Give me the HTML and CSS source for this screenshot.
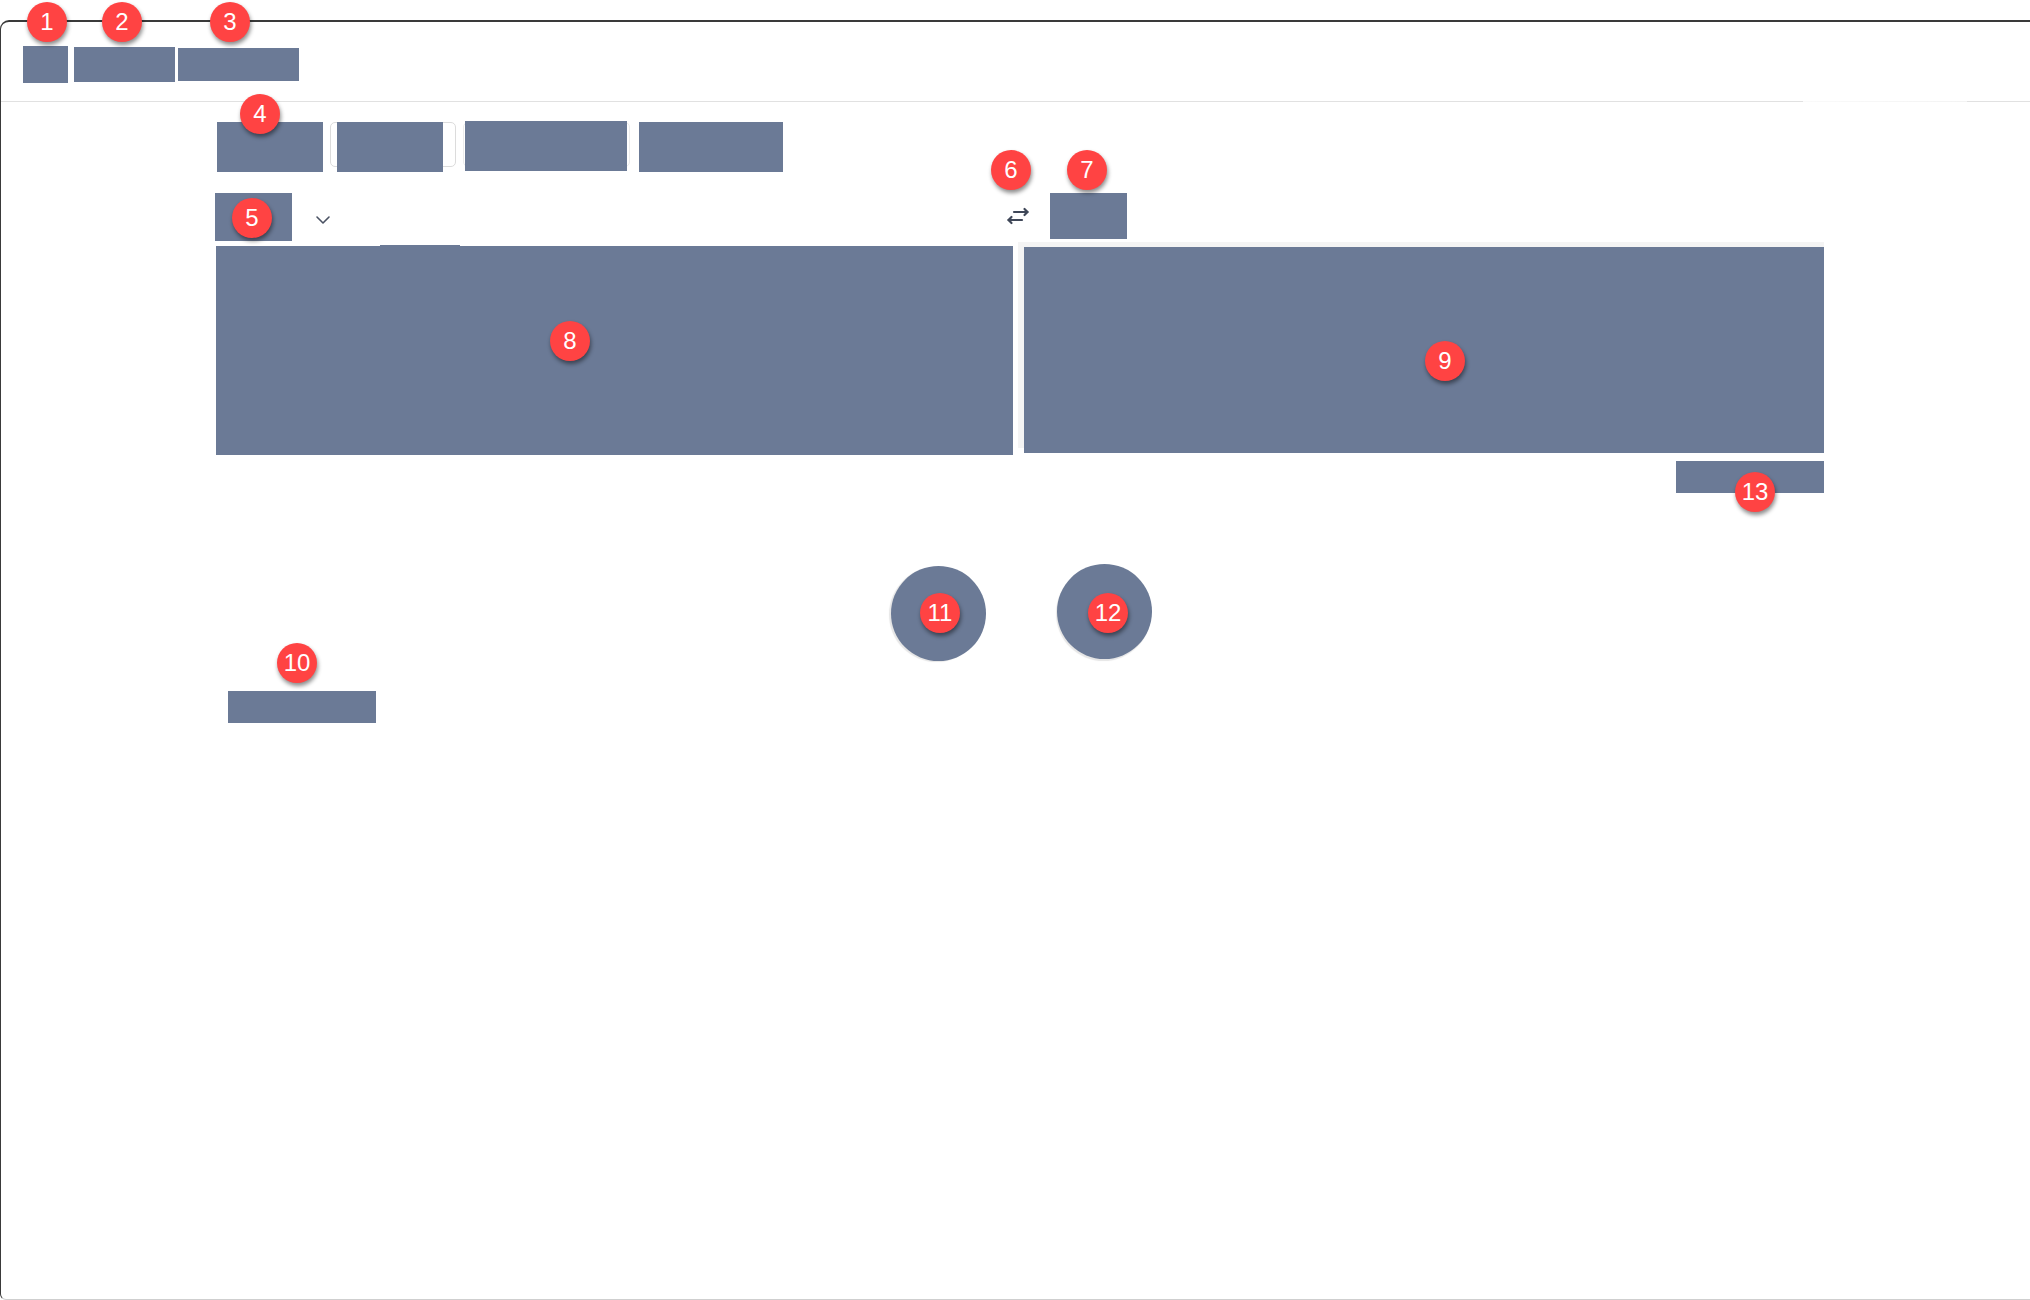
FILE: index.html
```html
<!DOCTYPE html>
<html lang="en">
<head>
<meta charset="utf-8">
<title>Translate layout</title>
<link rel="stylesheet" href="styles.css">
</head>
<body>
<div class="window">
  <header class="topbar">
    <div class="ph h1"></div>
    <div class="ph h2"></div>
    <div class="ph h3"></div>
  </header>
  <main class="content">
    <nav class="tabs">
      <div class="ph tab1"></div>
      <div class="tab-frame f2"><div class="ph tab2"></div></div>
      <div class="tab-frame f3"><div class="ph tab3"></div></div>
      <div class="ph tab4"></div>
    </nav>
    <div class="langbar">
      <div class="lang-left">
        <div class="ph lang-src"></div>
        <svg class="chevron" width="16" height="10" viewBox="0 0 16 10"><path d="M2 2 L8 8 L14 2" fill="none" stroke="#4a5263" stroke-width="1.6" stroke-linecap="round" stroke-linejoin="round"/></svg>
        <svg class="swap" width="24" height="18" viewBox="0 0 24 18"><g fill="none" stroke="#3f4758" stroke-width="2.2" stroke-linecap="round" stroke-linejoin="round"><path d="M8 5 H21.5"/><path d="M18.5 2 L21.5 5 L18.5 8"/><path d="M16 13 H2.5"/><path d="M5.5 10 L2.5 13 L5.5 16"/></g></svg>
      </div>
      <div class="lang-right">
        <div class="ph lang-dst"></div>
      </div>
    </div>
    <div class="panels">
      <div class="source-col">
        <div class="ph source-tab"></div>
        <div class="ph source"></div>
      </div>
      <div class="target-wrap"><div class="ph target"></div></div>
    </div>
    <div class="below">
      <div class="ph feedback"></div>
    </div>
    <div class="circles">
      <div class="ph circle c11"></div>
      <div class="ph circle c12"></div>
    </div>
    <div class="ph footer-link"></div>
  </main>
</div>

<div class="marker" style="left:47px;top:22px">1</div>
<div class="marker" style="left:122px;top:22px">2</div>
<div class="marker" style="left:230px;top:22px">3</div>
<div class="marker" style="left:260px;top:114px">4</div>
<div class="marker" style="left:252px;top:218px">5</div>
<div class="marker" style="left:1011px;top:170px">6</div>
<div class="marker" style="left:1087px;top:170px">7</div>
<div class="marker" style="left:570px;top:341px">8</div>
<div class="marker" style="left:1445px;top:361px">9</div>
<div class="marker" style="left:297px;top:663px">10</div>
<div class="marker" style="left:940px;top:613px">11</div>
<div class="marker" style="left:1108px;top:613px">12</div>
<div class="marker" style="left:1755px;top:492px">13</div>
</body>
</html>
```

FILE: styles.css
```css
* { box-sizing: border-box; }

html, body {
  margin: 0;
  padding: 0;
  background: #ffffff;
  font-family: "Liberation Sans", Arial, sans-serif;
}

body {
  width: 2030px;
  height: 1300px;
  overflow: hidden;
  position: relative;
}

.window {
  margin-top: 20px;
  height: 1280px;
  border-top: 2px solid #3a3a3a;
  border-left: 1px solid #3a3a3a;
  border-bottom: 1px solid #cfcfcf;
  border-radius: 9px 0 0 6px;
  background: #ffffff;
}

.ph { background: #6b7a96; }

/* top bar */
.topbar {
  height: 81px;
  padding: 5px 0 0 22px;
  display: flex;
  align-items: center;
  border-bottom: 1px solid transparent;
  background:
    linear-gradient(to right, #e1e1e1 0, #e1e1e1 1802px, #fafafa 1802px, #f3f3f3 1966px, #e1e1e1 1966px) bottom / 100% 1px no-repeat;
}
.h1 { width: 45px; height: 37px; }
.h2 { width: 101px; height: 35px; margin-left: 6px; }
.h3 { width: 121px; height: 33px; margin-left: 3px; }

/* main content */
.content {
  margin-left: 215px;
  width: 1608px;
  padding-top: 19px;
}

.tabs {
  display: flex;
  align-items: flex-start;
  height: 50px;
}
.tabs > * { flex-shrink: 0; }
.tab1 { width: 106px; height: 50px; margin-left: 1px; }
.tab-frame {
  height: 45px;
  border: 1px solid #dcdcdc;
  border-radius: 5px;
}
.f2 { width: 126px; margin-left: 7px; padding-left: 6px; }
.f3 { width: 167px; margin-left: 7px; padding-left: 1px; border-color: #ececec; }
.tab2 { width: 106px; height: 50px; margin-top: -1px; }
.tab3 { width: 162px; height: 50px; margin-top: -2px; }
.tab4 { width: 144px; height: 50px; margin-left: 9px; }

.langbar {
  margin-top: 21px;
  height: 49px;
  display: grid;
  grid-template-columns: 797px 1fr;
  column-gap: 11px;
}
.lang-left {
  display: flex;
  align-items: flex-start;
}
.lang-src { width: 77px; height: 48px; margin-left: -1px; }
.chevron { margin: 22px 0 0 23px; }
.swap { margin: 14px -17px 0 auto; }
.lang-right { display: flex; align-items: flex-start; }
.lang-dst { width: 77px; height: 46px; margin-left: 26px; }

.panels {
  display: grid;
  grid-template-columns: 797px 1fr;
  column-gap: 5px;
  align-items: start;
  height: 213px;
}
.source-col { padding-top: 3px; }
.source-tab { width: 80px; height: 1px; margin-left: 164px; }
.source { height: 209px; }
.target-wrap {
  height: 206px;
  background: #f4f4f4;
  padding: 5px 0 0 6px;
}
.target { height: 206px; }

.below {
  display: flex;
  justify-content: flex-end;
  margin-top: 6px;
}
.feedback { width: 148px; height: 32px; }

.circles {
  display: flex;
  align-items: flex-start;
  margin-top: 71px;
  padding-left: 675px;
  height: 97px;
}
.circle {
  width: 95px;
  height: 95px;
  border-radius: 50%;
  flex-shrink: 0;
}
.c11 { margin-top: 2px; box-shadow: -2px 1px 1px rgba(0, 0, 0, 0.10); }
.c12 { margin-left: 71px; box-shadow: -1px 2px 1px rgba(0, 0, 0, 0.10); }

.footer-link {
  width: 148px;
  height: 32px;
  margin: 30px 0 0 12px;
}

/* annotation markers */
.marker {
  position: absolute;
  width: 40px;
  height: 40px;
  margin: -20px 0 0 -20px;
  border-radius: 50%;
  background: #ff4343;
  color: #ffffff;
  font-family: "Liberation Sans", Arial, sans-serif;
  font-size: 24px;
  line-height: 40px;
  text-align: center;
  box-shadow: 1px 3px 4px rgba(0, 0, 0, 0.45);
}
```
